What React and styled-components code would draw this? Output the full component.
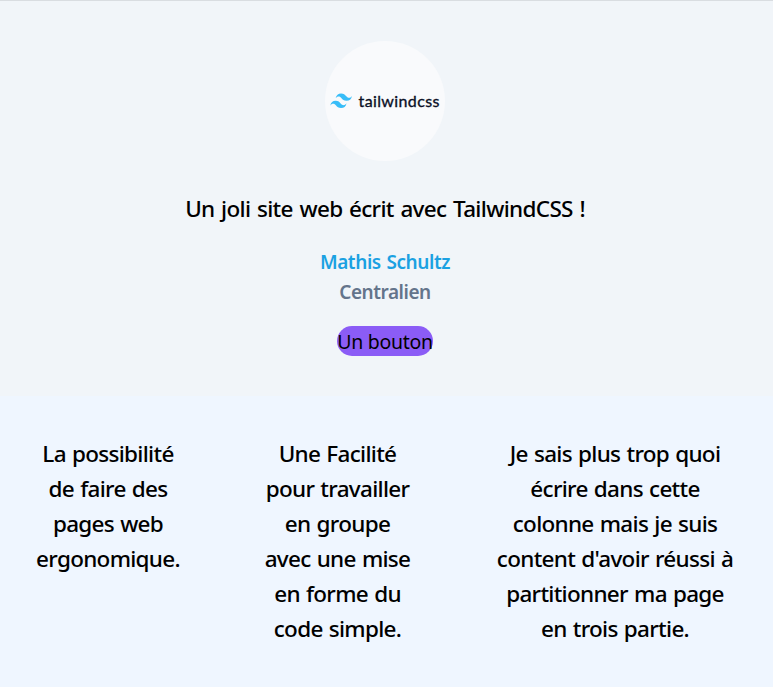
import React from 'react';
import styled, { createGlobalStyle } from 'styled-components';

const GlobalStyle = createGlobalStyle`
  *, *::before, *::after { box-sizing: border-box; }
  html { font-size: 20px; }
  body {
    margin: 0;
    background: #eff6ff;
    color: #000;
    font-family: "Segoe UI", "Noto Sans", sans-serif;
    font-size: 20px;
    line-height: 30px;
  }
  p { margin: 0; }
`;

const Hero = styled.header`
  display: flex;
  flex-direction: column;
  align-items: center;
  padding: 40px 3px 40px 0;
  border-top: 1px solid #d9dde1;
  background: #f1f5f9;
`;

const Avatar = styled.div`
  width: 120px;
  height: 120px;
  border-radius: 50%;
  overflow: hidden;
  background: #f9fafc;
`;

const Title = styled.p`
  margin-top: 30px;
  font-size: 22.5px;
  line-height: 35px;
  font-weight: 500;
  letter-spacing: -0.67px;
  word-spacing: 1.4px;
`;

const Caption = styled.div`
  display: flex;
  flex-direction: column;
  align-items: center;
  margin-top: 20px;
  padding-top: 1px;
  margin-bottom: -1px;
  font-size: 19px;
  font-weight: 600;
`;

const Name = styled.span`
  color: #1ba1e2;
  letter-spacing: -0.4px;
  word-spacing: 1px;
`;

const Role = styled.span`
  color: #64748b;
  letter-spacing: -0.45px;
`;

const Button = styled.button`
  display: flex;
  justify-content: center;
  width: 96px;
  height: 30px;
  margin-top: 20px;
  padding: 1px 0 0;
  border: 0;
  border-radius: 15px;
  background: #8b5cf6;
  color: #000;
  font: inherit;
  font-size: 19.5px;
  font-weight: 400;
  letter-spacing: -0.3px;
  white-space: nowrap;
`;

const Columns = styled.main`
  display: grid;
  grid-template-columns: 216px 243px 312px;
  padding: 40px 0;
`;

const Column = styled.p`
  font-size: 22.5px;
  line-height: 35px;
  font-weight: 500;
  text-align: center;
`;

const Line = styled.span`
  display: block;
  white-space: nowrap;
  letter-spacing: -0.7px;
  word-spacing: 1px;
`;

const columns = [
  ['La possibilité', 'de faire des', 'pages web', 'ergonomique.'],
  ['Une Facilité', 'pour travailler', 'en groupe', 'avec une mise', 'en forme du', 'code simple.'],
  [
    'Je sais plus trop quoi',
    'écrire dans cette',
    'colonne mais je suis',
    "content d'avoir réussi à",
    'partitionner ma page',
    'en trois partie.',
  ],
];

function Logo() {
  return (
    <svg width="120" height="120" viewBox="0 0 120 120" role="img" aria-label="tailwindcss">
      <path
        fill="#38bdf8"
        transform="translate(5.2 52.5) scale(.403 .45)"
        d="M27 0c-7.2 0-11.7 3.6-13.5 10.8 2.7-3.6 5.85-4.95 9.45-4.05 2.054.513 3.522 2.004 5.147 3.653C30.744 13.09 33.808 16.2 40.5 16.2c7.2 0 11.7-3.6 13.5-10.8-2.7 3.6-5.85 4.95-9.45 4.05-2.054-.513-3.522-2.004-5.147-3.653C36.756 3.11 33.692 0 27 0zM13.5 16.2C6.3 16.2 1.8 19.8 0 27c2.7-3.6 5.85-4.95 9.45-4.05 2.054.514 3.522 2.004 5.147 3.653C17.244 29.29 20.308 32.4 27 32.4c7.2 0 11.7-3.6 13.5-10.8-2.7 3.6-5.85 4.95-9.45 4.05-2.054-.513-3.522-2.004-5.147-3.653C23.256 19.31 20.192 16.2 13.5 16.2z"
      />
      <text
        x="33.5"
        y="65.8"
        fill="#0b1026"
        fontFamily="Lato, sans-serif"
        fontSize="16"
        fontWeight="400"
        stroke="#0b1026"
        strokeWidth="0.35"
        textLength="81"
        lengthAdjust="spacing"
      >
        tailwindcss
      </text>
    </svg>
  );
}

export default function App() {
  return (
    <>
      <GlobalStyle />
      <Hero>
        <Avatar>
          <Logo />
        </Avatar>
        <Title>Un joli site web écrit avec TailwindCSS !</Title>
        <Caption>
          <Name>Mathis Schultz</Name>
          <Role>Centralien</Role>
        </Caption>
        <Button type="button">Un bouton</Button>
      </Hero>
      <Columns>
        {columns.map((lines) => (
          <Column key={lines[0]}>
            {lines.map((line) => (
              <Line key={line}>{line} </Line>
            ))}
          </Column>
        ))}
      </Columns>
    </>
  );
}
